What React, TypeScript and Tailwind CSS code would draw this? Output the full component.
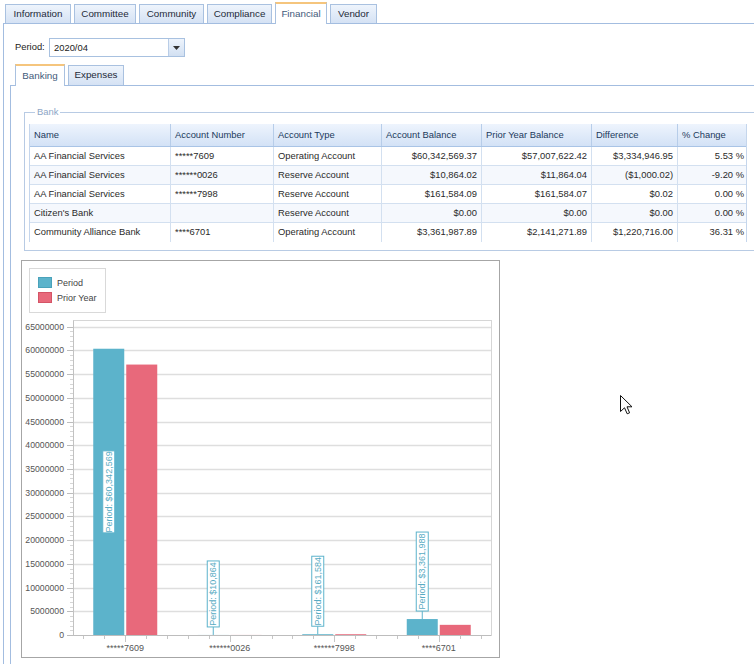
import React from 'react';

const topTabs = [
  { label: 'Information', w: 'w-[66px]' },
  { label: 'Committee', w: 'w-[62px]' },
  { label: 'Community', w: 'w-[65px]' },
  { label: 'Compliance', w: 'w-[65px]' },
  { label: 'Financial', w: 'w-[52px]', active: true },
  { label: 'Vendor', w: 'w-[47px]' },
];

const columns = [
  { label: 'Name', w: 'w-[141px]', right: false },
  { label: 'Account Number', w: 'w-[103px]', right: false },
  { label: 'Account Type', w: 'w-[108px]', right: false },
  { label: 'Account Balance', w: 'w-[100px]', right: true },
  { label: 'Prior Year Balance', w: 'w-[110px]', right: true },
  { label: 'Difference', w: 'w-[86px]', right: true },
  { label: '% Change', w: 'w-[70px]', right: true },
];

const rows = [
  ['AA Financial Services', '*****7609', 'Operating Account', '$60,342,569.37', '$57,007,622.42', '$3,334,946.95', '5.53 %'],
  ['AA Financial Services', '******0026', 'Reserve Account', '$10,864.02', '$11,864.04', '($1,000.02)', '-9.20 %'],
  ['AA Financial Services', '******7998', 'Reserve Account', '$161,584.09', '$161,584.07', '$0.02', '0.00 %'],
  ["Citizen's Bank", '', 'Reserve Account', '$0.00', '$0.00', '$0.00', '0.00 %'],
  ['Community Alliance Bank', '****6701', 'Operating Account', '$3,361,987.89', '$2,141,271.89', '$1,220,716.00', '36.31 %'],
];

// chart data - balances per account
const series = [
  { label: '*****7609', period: 60342569.37, prior: 57007622.42, text: 'Period: $60,342,569', len: 82, inside: true },
  { label: '******0026', period: 10864.02, prior: 11864.04, text: 'Period: $10,864', len: 66 },
  { label: '******7998', period: 161584.09, prior: 161584.07, text: 'Period: $161,584', len: 70 },
  { label: '****6701', period: 3361987.89, prior: 2141271.89, text: 'Period: $3,361,988', len: 79 },
];

const ZERO = 374;
const STEP = 23.72;
const yOf = (v: number) => ZERO - (v / 5000000) * STEP;

const BalanceChart: React.FC = () => {
  const ticks = Array.from({ length: 14 }, (_, k) => k);
  const groupW = 104.5;
  return (
    <svg width={477} height={396} className="block">
      {/* legend */}
      <rect x={7.5} y={7.5} width={76} height={44} fill="#fff" stroke="#d9d9d9" />
      <rect x={16.5} y={16.5} width={13} height={10} fill="#5cb3cb" stroke="#4aa2ba" />
      <text x={35} y={25} fontSize={9} fill="#444">Period</text>
      <rect x={16.5} y={31.5} width={13} height={10} fill="#e8697b" stroke="#d45466" />
      <text x={35} y={40} fontSize={9} fill="#444">Prior Year</text>

      {/* plot frame */}
      <rect x={51.5} y={59.5} width={418} height={315} fill="#fff" stroke="#d6d6d6" />
      {ticks.slice(1).map((k) => {
        const y = Math.round(ZERO - k * STEP) + 0.5;
        return <line key={k} x1={52} x2={469} y1={y} y2={y} stroke="#dedede" strokeWidth={1.5} />;
      })}
      {Array.from({ length: 66 }, (_, i) => {
        const y = Math.round(ZERO - i * (STEP / 5)) + 0.5;
        const major = i % 5 === 0;
        return <line key={i} x1={major ? 45 : 48} x2={51} y1={y} y2={y} stroke={major ? '#bdbdbd' : '#d6d6d6'} />;
      })}
      {ticks.map((k) => (
        <text key={k} x={42} y={ZERO - k * STEP + 3} fontSize={8.7} fill="#555" textAnchor="end">
          {k * 5000000}
        </text>
      ))}
      <line x1={51.5} x2={51.5} y1={59.5} y2={375} stroke="#c2c2c2" />

      {series.map((s, i) => {
        const c = 51 + groupW * (i + 0.5);
        const pTop = yOf(s.period);
        const qTop = yOf(s.prior);
        const lx = c - 16.5;
        const boxTop = s.inside ? (pTop + ZERO) / 2 - s.len / 2 : pTop - 8 - s.len;
        const boxMid = boxTop + s.len / 2;
        return (
          <g key={s.label}>
            <rect x={c - 32} y={pTop} width={31} height={ZERO - pTop} fill="#5cb3cb" />
            <rect x={c + 1} y={qTop} width={31} height={ZERO - qTop} fill="#e8697b" />
            {[-2, -1, 0, 1, 2].map((k) => {
              const x = Math.round(c + k * 20.9) + 0.5;
              return <line key={k} x1={x} x2={x} y1={375} y2={k === 0 ? 381 : 378} stroke="#c6c6c6" />;
            })}
            {!s.inside && <line x1={lx} x2={lx} y1={boxTop + s.len} y2={pTop} stroke="#5cb3cb" />}
            <rect x={lx - 6} y={boxTop} width={12} height={s.len} fill="#fff" stroke="#5cb3cb" />
            <text
              x={lx}
              y={boxMid}
              fontSize={9}
              fill="#58abc3"
              textAnchor="middle"
              dominantBaseline="central"
              transform={`rotate(-90 ${lx} ${boxMid})`}
            >
              {s.text}
            </text>
            <text x={c} y={390} fontSize={9} fill="#555" textAnchor="middle">
              {s.label}
            </text>
          </g>
        );
      })}
      <line x1={51.5} x2={469} y1={374.5} y2={374.5} stroke="#bdbdbd" />
    </svg>
  );
};

const App: React.FC = () => {
  return (
    <div className="relative w-[754px] h-[664px] overflow-hidden bg-white font-['Liberation_Sans',Arial,sans-serif] text-[9.4px] text-[#2a2a2a]">
      {/* Top tab strip */}
      <div className="flex items-end gap-[3px] pl-[5px] h-[23px] text-[9.8px]">
        {topTabs.map((t) =>
          t.active ? (
            <div
              key={t.label}
              className={`${t.w} relative z-10 -mb-px h-[22px] flex items-center justify-center bg-white border-x border-[#a9c1e0] border-t-2 border-t-[#f5c57d] text-[#3f5a7a]`}
            >
              {t.label}
            </div>
          ) : (
            <div
              key={t.label}
              className={`${t.w} h-[19px] flex items-center justify-center bg-gradient-to-b from-[#eef4fc] to-[#d5e2f4] border-x border-t border-[#a9c1e0] text-[#1e2a38]`}
            >
              {t.label}
            </div>
          )
        )}
      </div>

      {/* Main panel */}
      <div className="ml-[3px] h-[641px] border-l border-t border-[#a3bde0]">
        <div className="flex items-center pt-[14px] pl-[11px]">
          <span className="w-[34px] text-[#222]">Period:</span>
          <div className="flex h-[19px] w-[136px] border border-[#a8c1e0] bg-white">
            <div className="flex-1 pl-[4px] leading-[17px] text-[#222]">2020/04</div>
            <div className="w-[16px] flex items-center justify-center bg-gradient-to-b from-[#eef4fc] to-[#d2e0f2] border-l border-[#b9cde7]">
              <svg width="7" height="4" viewBox="0 0 7 4">
                <path d="M0 0H7L3.5 4Z" fill="#333" />
              </svg>
            </div>
          </div>
        </div>

        <div className="mt-[7px] ml-[6px]">
          {/* Inner tab strip */}
          <div className="flex items-end gap-[3px] pl-[5px] h-[21px] text-[9.8px]">
            <div className="relative z-10 -mb-px w-[50px] h-[22px] flex items-center justify-center bg-white border-x border-[#a9c1e0] border-t-2 border-t-[#f5c57d] text-[#3f5a7a]">
              Banking
            </div>
            <div className="w-[56px] h-[20px] flex items-center justify-center bg-gradient-to-b from-[#eef4fc] to-[#d5e2f4] border-x border-t border-[#a9c1e0] text-[#1e2a38]">
              Expenses
            </div>
          </div>

          <div className="h-[600px] border-l border-t border-[#a3bde0] pt-[20px]">
            {/* Bank fieldset */}
            <fieldset className="ml-[13px] w-[740px] border border-[#b8cbe4] pl-[4px] pb-[8px]">
              <legend className="ml-[6px] px-[2px] leading-[12px] text-[#8da6c6]">Bank</legend>
              <div className="mt-[6px] w-[718px] border-x border-[#c5d6ec]">
                <div className="flex h-[23px] bg-gradient-to-b from-[#eef4fd] to-[#d3e2f6] border-b border-[#a9c4e6]">
                  {columns.map((c, i) => (
                    <div
                      key={c.label}
                      className={`${c.w} shrink-0 pl-[4px] leading-[22px] text-[#1b3a5c] ${i < columns.length - 1 ? 'border-r border-[#b7cde9]' : ''}`}
                    >
                      {c.label}
                    </div>
                  ))}
                </div>
                {rows.map((r, ri) => (
                  <div
                    key={ri}
                    className={`flex h-[19px] ${ri % 2 === 1 ? 'bg-[#f5f8fd]' : 'bg-white'} ${ri < rows.length - 1 ? 'border-b border-[#d3e0f0]' : ''}`}
                  >
                    {r.map((cell, ci) => (
                      <div
                        key={ci}
                        className={`${columns[ci].w} shrink-0 leading-[18px] px-[4px] ${columns[ci].right ? 'text-right' : 'text-left'} ${ci < r.length - 1 ? 'border-r border-[#d3e0f0]' : ''}`}
                      >
                        {cell}
                      </div>
                    ))}
                  </div>
                ))}
              </div>
            </fieldset>

            {/* Chart */}
            <div className="mt-[9px] ml-[10px] w-[479px] h-[398px] border border-[#a6a6a6] bg-white">
              <BalanceChart />
            </div>
          </div>
        </div>
      </div>

      {/* mouse pointer */}
      <svg className="absolute left-[620px] top-[395px]" width="13" height="20" viewBox="0 0 13 20">
        <path d="M0.5 0.5V16.5L4.5 12.8L7.2 18.8L9.6 17.8L7 11.8H12Z" fill="#fff" stroke="#111" strokeLinejoin="round" />
      </svg>
    </div>
  );
};

export default App;
